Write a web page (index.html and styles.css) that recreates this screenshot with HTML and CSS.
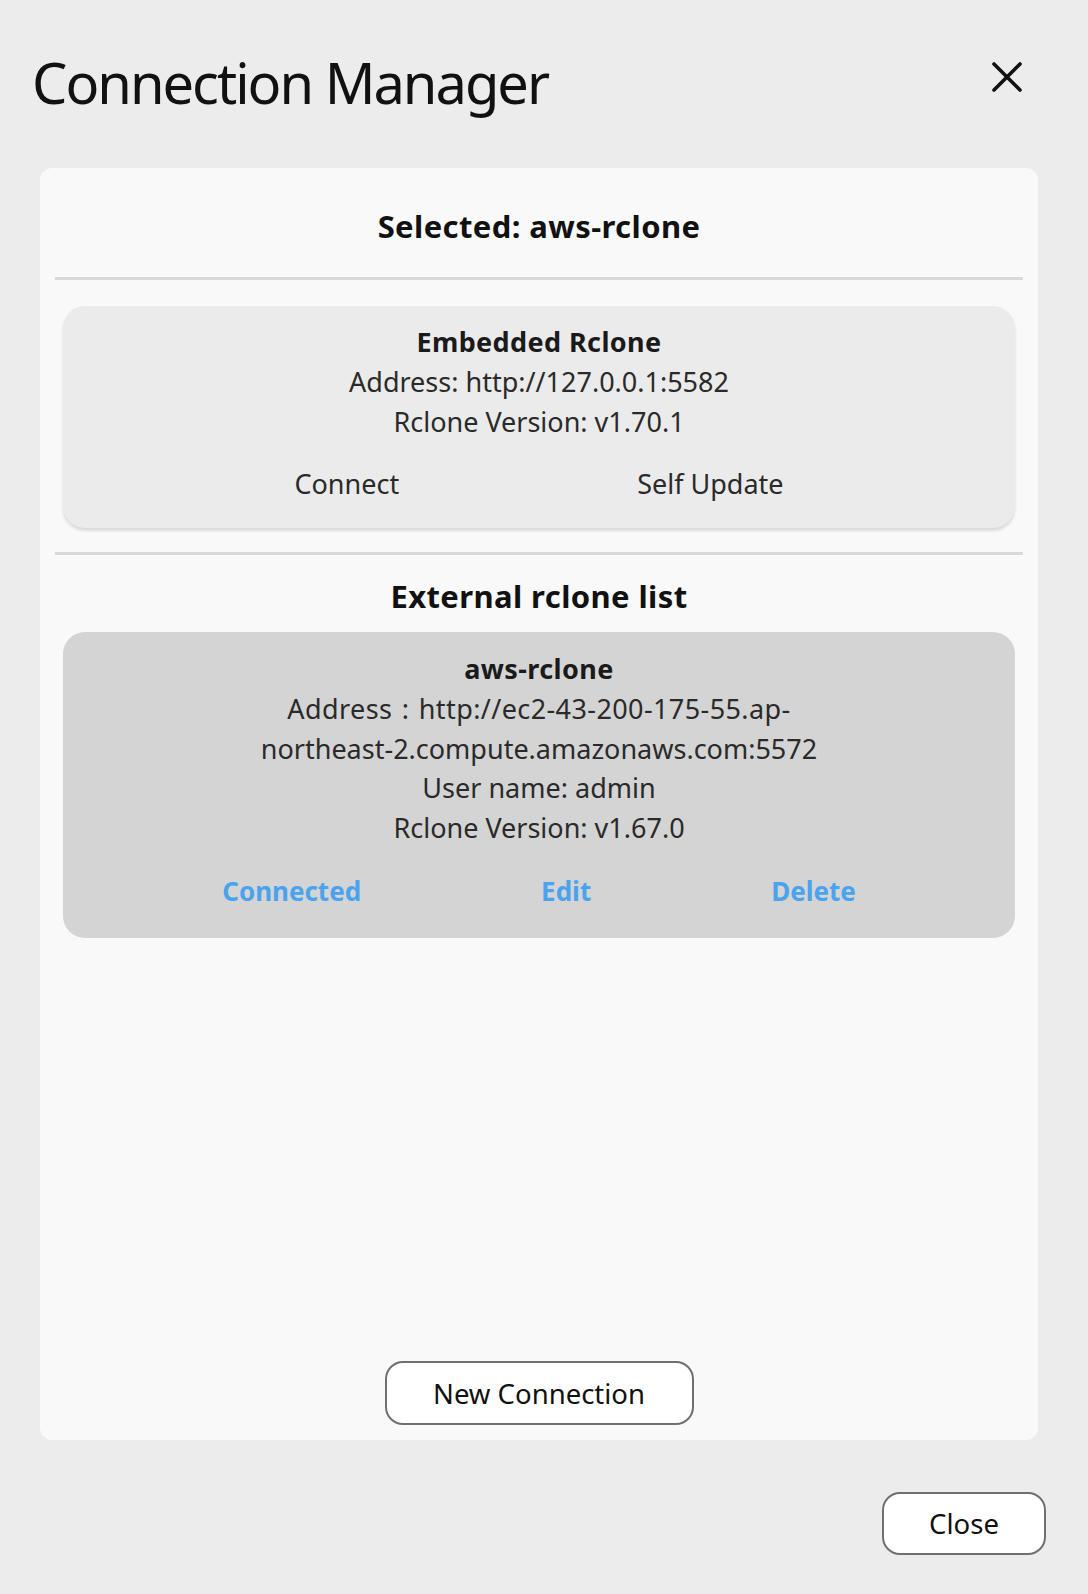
FILE: index.html
```html
<!DOCTYPE html>
<html>
<head>
<meta charset="utf-8">
<link rel="stylesheet" href="styles.css">
</head>
<body>
<div class="page">
  <header class="top">
    <h1 class="title">Connection Manager</h1>
    <button class="x-btn" aria-label="close">
      <svg width="30" height="30" viewBox="0 0 30 30"><path d="M2 2 L28 28 M28 2 L2 28" stroke="#111" stroke-width="3.6" stroke-linecap="round" fill="none"/></svg>
    </button>
  </header>
  <main class="panel">
    <div class="selected">Selected: aws-rclone</div>
    <hr class="divider">
    <section class="conn conn-embedded">
      <div class="conn-name">Embedded Rclone</div>
      <div class="conn-line">Address: http://127.0.0.1:5582</div>
      <div class="conn-line">Rclone Version: v1.70.1</div>
      <div class="actions actions-two">
        <span class="act">Connect</span>
        <span class="act">Self Update</span>
      </div>
    </section>
    <hr class="divider divider-2">
    <div class="list-title">External rclone list</div>
    <section class="conn conn-external">
      <div class="conn-name">aws-rclone</div>
      <div class="conn-line wide">Address : http://ec2-43-200-175-55.ap-</div>
      <div class="conn-line">northeast-2.compute.amazonaws.com:5572</div>
      <div class="conn-line">User name: admin</div>
      <div class="conn-line">Rclone Version: v1.67.0</div>
      <div class="actions actions-three">
        <span class="act blue">Connected</span>
        <span class="act blue">Edit</span>
        <span class="act blue">Delete</span>
      </div>
    </section>
    <div class="spacer"></div>
    <div class="new-row"><button class="btn btn-new">New Connection</button></div>
  </main>
  <footer class="bottom">
    <button class="btn btn-close">Close</button>
  </footer>
</div>
</body>
</html>
```

FILE: styles.css
```css
* { box-sizing: border-box; }
html, body { margin: 0; padding: 0; }
body {
  background: #ececec;
  font-family: "Noto Sans", "Open Sans", sans-serif;
  color: #1a1a1a;
  width: 1088px;
  height: 1594px;
  overflow: hidden;
}
.page {
  display: flex;
  flex-direction: column;
  height: 1594px;
}
.top {
  display: flex;
  align-items: flex-start;
  justify-content: space-between;
  height: 168px;
  padding: 0 66px 0 32px;
}
.title {
  margin: 0;
  margin-top: 42px;
  font-weight: 400;
  font-size: 56px;
  line-height: 80px;
  letter-spacing: -2px;
  color: #111;
}
.x-btn {
  margin-top: 62px;
  border: 0;
  background: transparent;
  padding: 0;
  width: 30px;
  height: 30px;
  display: block;
}
.x-btn svg { display: block; }
.panel {
  margin: 0 50px 0 40px;
  height: 1272px;
  background: #f9f9f9;
  border-radius: 12px;
  display: flex;
  flex-direction: column;
  padding: 0 15px 15px;
}
.selected {
  height: 109px;
  display: flex;
  align-items: center;
  justify-content: center;
  padding-top: 6px;
  font-weight: 700;
  font-size: 31px;
  letter-spacing: 0.4px;
  color: #111;
}
.divider {
  margin: 0;
  border: 0;
  height: 3px;
  background: #d9d9d9;
}
.conn {
  margin: 26px 8px 0;
  border-radius: 22px;
  display: flex;
  flex-direction: column;
  align-items: center;
  text-align: center;
  font-size: 27px;
  color: #2a2a2a;
}
.conn-embedded {
  background: #ebebeb;
  height: 222px;
  padding-top: 16px;
  box-shadow: 0 3px 3px rgba(0,0,0,0.12);
}
.conn-external {
  background: #d4d4d4;
  height: 306px;
  margin-top: 16px;
  padding-top: 17px;
}
.conn-name {
  font-weight: 700;
  font-size: 27px;
  letter-spacing: 0.4px;
  line-height: 40px;
  color: #1a1a1a;
}
.conn-line {
  line-height: 39.5px;
}
.wide { word-spacing: 2px; letter-spacing: 0.4px; }
.actions {
  display: flex;
  justify-content: center;
  width: 100%;
  margin-top: 22px;
}
.act {
  line-height: 40px;
}
.actions-two { gap: 238px; margin-top: 23px; }
.actions-three { gap: 180px; margin-top: 24px; }
.blue {
  color: #4aa3ee;
  font-weight: 700;
  font-size: 26px;
}
.divider-2 { margin-top: 24px; }
.list-title {
  text-align: center;
  font-weight: 700;
  font-size: 31px;
  letter-spacing: 0.4px;
  line-height: 40px;
  margin-top: 21px;
  color: #111;
}
.spacer { flex: 1; }
.new-row {
  display: flex;
  justify-content: center;
}
.btn {
  background: #fff;
  border: 2px solid #707070;
  border-radius: 18px;
  font-family: inherit;
  font-size: 27.5px;
  color: #111;
  height: 64px;
}
.btn-new { width: 309px; }
.bottom {
  display: flex;
  justify-content: flex-end;
  padding: 52px 42px 0 0;
}
.btn-close { width: 164px; height: 63px; }
```
